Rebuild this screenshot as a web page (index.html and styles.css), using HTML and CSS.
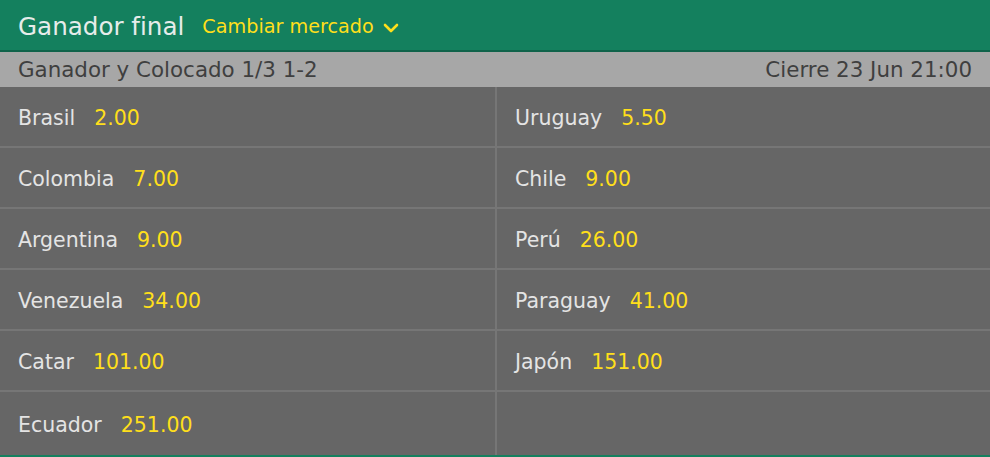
FILE: index.html
```html
<!DOCTYPE html>
<html lang="es">
<head>
<meta charset="utf-8">
<title>Ganador final</title>
<link rel="stylesheet" href="styles.css">
</head>
<body>
<div class="market">
  <header class="market-head">
    <h1 class="title">Ganador final</h1>
    <button class="switch">Cambiar mercado
      <svg class="chev" viewBox="0 0 16 10" width="16" height="10"><path d="M2 2 L8 8 L14 2" fill="none" stroke="currentColor" stroke-width="2.6" stroke-linecap="round" stroke-linejoin="round"/></svg>
    </button>
  </header>
  <div class="sub">
    <span>Ganador y Colocado 1/3 1-2</span>
    <span>Cierre 23 Jun 21:00</span>
  </div>
  <div class="grid">
    <div class="cell"><span class="name">Brasil</span><span class="odds">2.00</span></div>
    <div class="cell"><span class="name">Uruguay</span><span class="odds">5.50</span></div>
    <div class="cell"><span class="name">Colombia</span><span class="odds">7.00</span></div>
    <div class="cell"><span class="name">Chile</span><span class="odds">9.00</span></div>
    <div class="cell"><span class="name">Argentina</span><span class="odds">9.00</span></div>
    <div class="cell"><span class="name">Perú</span><span class="odds">26.00</span></div>
    <div class="cell"><span class="name">Venezuela</span><span class="odds">34.00</span></div>
    <div class="cell"><span class="name">Paraguay</span><span class="odds">41.00</span></div>
    <div class="cell"><span class="name">Catar</span><span class="odds">101.00</span></div>
    <div class="cell"><span class="name">Japón</span><span class="odds">151.00</span></div>
    <div class="cell"><span class="name">Ecuador</span><span class="odds">251.00</span></div>
    <div class="cell"></div>
  </div>
</div>
</body>
</html>
```
FILE: styles.css
```css
html, body {
  margin: 0;
  padding: 0;
  background: #666666;
}
body {
  font-family: "DejaVu Sans", Verdana, sans-serif;
  width: 990px;
  height: 457px;
  overflow: hidden;
}
.market {
  display: flex;
  flex-direction: column;
  height: 457px;
  border-bottom: 2px solid #14805e;
  box-sizing: border-box;
}
.market-head {
  height: 52px;
  background: #14805e;
  border-bottom: 2px solid #0f634a;
  display: flex;
  align-items: center;
  padding: 2px 18px 0;
  box-sizing: border-box;
  gap: 18px;
  flex: none;
}
.title {
  margin: 0;
  font-weight: normal;
  font-size: 24.6px;
  color: #e6ecea;
}
.switch {
  display: flex;
  align-items: center;
  gap: 9px;
  background: none;
  border: 0;
  padding: 0;
  font-family: inherit;
  font-size: 19.2px;
  color: #ffdf1b;
  margin-top: 1px;
}
.chev {
  display: block;
  margin-top: 2px;
}
.sub {
  flex: none;
  height: 35px;
  background: #a7a7a7;
  color: #3f3f3f;
  display: flex;
  justify-content: space-between;
  align-items: center;
  padding: 0 18px;
  font-size: 21.4px;
}
.grid {
  flex: 1;
  display: grid;
  grid-template-columns: 495px 1fr;
  grid-template-rows: repeat(5, 59px) 1fr;
  gap: 2px;
  background: #767676;
}
.cell {
  background: #666666;
  display: flex;
  align-items: center;
  padding: 2px 18px 0;
  font-size: 20.5px;
  gap: 19px;
}
.name {
  color: #e4e4e4;
}
.odds {
  color: #ffdf1b;
}
```
